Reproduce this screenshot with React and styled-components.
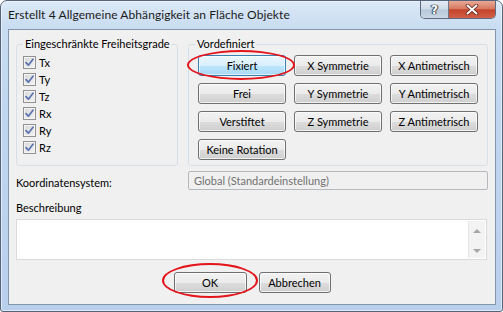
import React from "react";
import styled, { createGlobalStyle } from "styled-components";

const GlobalStyle = createGlobalStyle`
  html, body {
    margin: 0;
    padding: 0;
    background: #ffffff;
  }
  body {
    font-family: Lato, "Liberation Sans", sans-serif;
    font-size: 11px;
    color: #000;
  }
  * {
    box-sizing: border-box;
  }
`;

const dofs = ["Tx", "Ty", "Tz", "Rx", "Ry", "Rz"];

const presets = [
  { label: "Fixiert", hot: true, mark: true },
  { label: "X Symmetrie" },
  { label: "X Antimetrisch" },
  { label: "Frei" },
  { label: "Y Symmetrie" },
  { label: "Y Antimetrisch" },
  { label: "Verstiftet" },
  { label: "Z Symmetrie" },
  { label: "Z Antimetrisch" },
  { label: "Keine Rotation" },
];

function CheckMark() {
  return (
    <svg width="9" height="9" viewBox="0 0 9 9">
      <path
        d="M1 4.6 L3.4 7.2 L8 1.2"
        fill="none"
        stroke="#5a72b0"
        strokeWidth="1.7"
        strokeLinecap="round"
        strokeLinejoin="round"
      />
    </svg>
  );
}

function CloseGlyph() {
  return (
    <svg width="14" height="11" viewBox="0 0 14 11">
      <path d="M2.5 1.5 L11.5 9.5 M11.5 1.5 L2.5 9.5" stroke="#5a2318" strokeWidth="3.6" strokeLinecap="round" />
      <path d="M2.5 1.5 L11.5 9.5 M11.5 1.5 L2.5 9.5" stroke="#ffffff" strokeWidth="2" strokeLinecap="round" />
    </svg>
  );
}

function App() {
  return (
    <>
      <GlobalStyle />
      <Window>
        <TitleBar>
          <Title>Erstellt 4 Allgemeine Abhängigkeit an Fläche Objekte</Title>
          <CaptionButtons>
            <HelpButton>?</HelpButton>
            <CloseButton>
              <CloseGlyph />
            </CloseButton>
          </CaptionButtons>
        </TitleBar>
        <Client>
          <TopRow>
            <Group $width={162}>
              <Legend>Eingeschränkte Freiheitsgrade</Legend>
              <CheckList>
                {dofs.map((d) => (
                  <CheckRow key={d}>
                    <CheckBox>
                      <CheckMark />
                    </CheckBox>
                    <span>{d}</span>
                  </CheckRow>
                ))}
              </CheckList>
            </Group>
            <Group $width={300}>
              <Legend>Vordefiniert</Legend>
              <PresetGrid>
                {presets.map((p) =>
                  p.mark ? (
                    <Marked key={p.label} $inset="-5px -9px -4px -11px">
                      <Button $hot={p.hot}>{p.label}</Button>
                    </Marked>
                  ) : (
                    <Button key={p.label}>{p.label}</Button>
                  )
                )}
              </PresetGrid>
            </Group>
          </TopRow>
          <FieldRow>
            <FieldLabel>Koordinatensystem:</FieldLabel>
            <DisabledField>Global (Standardeinstellung)</DisabledField>
          </FieldRow>
          <SectionLabel>Beschreibung</SectionLabel>
          <TextArea>
            <ScrollBar>
              <Arrow $up />
              <Arrow />
            </ScrollBar>
          </TextArea>
          <Footer>
            <Marked $inset="-9px -11px -5px -12px">
              <Button $width={73}>OK</Button>
            </Marked>
            <Button $width={72}>Abbrechen</Button>
          </Footer>
        </Client>
      </Window>
    </>
  );
}

const Window = styled.div`
  width: 503px;
  height: 312px;
  display: flex;
  flex-direction: column;
  border: 1px solid #55647a;
  border-radius: 7px 7px 3px 3px;
  background: linear-gradient(180deg, #dce9f7 0%, #c8dcf1 9%, #bed6ef 40%, #b8d0ec 100%);
  box-shadow: inset 0 0 0 1px rgba(255, 255, 255, 0.55);
  overflow: hidden;
`;

const TitleBar = styled.div`
  height: 28px;
  display: flex;
  align-items: flex-start;
  flex-shrink: 0;
`;

const Title = styled.div`
  padding: 6px 0 0 7px;
  font-size: 12px;
  letter-spacing: 0.08px;
  line-height: 16px;
  color: #1a1a1a;
  white-space: nowrap;
`;

const CaptionButtons = styled.div`
  margin-left: auto;
  margin-right: 6px;
  display: flex;
  height: 18px;
  border: 1px solid #5e6b7e;
  border-top: none;
  border-radius: 0 0 5px 5px;
  overflow: hidden;
`;

const HelpButton = styled.div`
  width: 28px;
  display: flex;
  align-items: center;
  justify-content: center;
  background: linear-gradient(180deg, #e3ebf4 0%, #cfdbe8 48%, #b8c8da 52%, #c9d7e6 100%);
  border-right: 1px solid #6b7789;
  font-family: "DejaVu Sans", sans-serif;
  font-weight: bold;
  font-size: 12px;
  color: #ffffff;
  text-shadow: 0 0 1px #2f3a4a, 0 0 1px #2f3a4a, 1px 0 1px #2f3a4a, -1px 0 1px #2f3a4a;
`;

const CloseButton = styled.div`
  width: 46px;
  display: flex;
  align-items: center;
  justify-content: center;
  background: linear-gradient(180deg, #e9a996 0%, #d77a62 45%, #c4432a 52%, #d2604a 100%);
`;

const Client = styled.div`
  flex: 1;
  margin: 0 6px 6px 7px;
  border: 1px solid #8496aa;
  background: #f0f0f0;
  padding: 7px 7px;
  display: flex;
  flex-direction: column;
`;

const TopRow = styled.div`
  display: flex;
  gap: 10px;
  height: 129px;
`;

const Group = styled.fieldset`
  width: ${(p) => p.$width}px;
  margin: 0;
  padding: 0 6px;
  min-width: 0;
  border: 1px solid #d5dfe5;
  border-radius: 3px;
`;

const Legend = styled.legend`
  padding: 0 2px;
  font-size: 11px;
  line-height: 14px;
  white-space: nowrap;
`;

const CheckList = styled.div`
  display: flex;
  flex-direction: column;
  padding-top: 3px;
`;

const CheckRow = styled.div`
  height: 17px;
  display: flex;
  align-items: center;
  gap: 3px;
`;

const CheckBox = styled.span`
  width: 13px;
  height: 13px;
  border: 1px solid #929292;
  background: linear-gradient(135deg, #d9d9d9 0%, #e8e8e8 60%, #f2f2f2 100%);
  box-shadow: inset 0 0 0 1px #f4f4f4;
  display: flex;
  align-items: center;
  justify-content: center;
`;

const PresetGrid = styled.div`
  display: grid;
  grid-template-columns: repeat(3, 88px);
  grid-auto-rows: 21px;
  column-gap: 8px;
  row-gap: 7px;
  padding: 4px 0 0 3px;
`;

const Marked = styled.span`
  position: relative;
  display: inline-flex;
  &::after {
    content: "";
    position: absolute;
    inset: ${(p) => p.$inset};
    border: 2px solid #e3141a;
    border-radius: 50%;
    pointer-events: none;
  }
`;

const Button = styled.button`
  width: ${(p) => (p.$width ? `${p.$width}px` : "100%")};
  height: 21px;
  padding: 0;
  font-family: inherit;
  font-size: 11px;
  color: #000;
  border: 1px solid ${(p) => (p.$hot ? "#3c7fb1" : "#707070")};
  border-radius: 3px;
  background: ${(p) =>
    p.$hot
      ? "linear-gradient(180deg, #eaf6fd 0%, #d9f0fc 50%, #bee6fd 51%, #a7d9f5 100%)"
      : "linear-gradient(180deg, #f2f2f2 0%, #ebebeb 50%, #dddddd 51%, #cfcfcf 100%)"};
  box-shadow: inset 0 0 0 1px ${(p) => (p.$hot ? "rgba(255,255,255,0.6)" : "rgba(255,255,255,0.7)")};
`;

const FieldRow = styled.div`
  display: grid;
  grid-template-columns: 172px 1fr;
  align-items: center;
  margin-top: 5px;
`;

const FieldLabel = styled.span`
  padding-top: 4px;
`;

const DisabledField = styled.div`
  height: 19px;
  border: 1px solid #b5b9bd;
  border-radius: 2px;
  padding: 0 5px;
  display: flex;
  align-items: center;
  color: #707070;
`;

const SectionLabel = styled.div`
  margin-top: 11px;
  line-height: 14px;
`;

const TextArea = styled.div`
  margin-top: 4px;
  height: 41px;
  width: 471px;
  border: 1px solid #dadada;
  background: #ffffff;
  display: flex;
  justify-content: flex-end;
`;

const ScrollBar = styled.div`
  width: 17px;
  margin: 1px;
  background: #f3f3f3;
  border-left: 1px solid #e6e6e6;
  display: flex;
  flex-direction: column;
  justify-content: space-between;
  align-items: center;
  padding: 8px 0 5px;
`;

const Arrow = styled.span`
  width: 0;
  height: 0;
  border-left: 4px solid transparent;
  border-right: 4px solid transparent;
  ${(p) => (p.$up ? "border-bottom: 4px solid #a6a6a6;" : "border-top: 4px solid #a6a6a6;")}
`;

const Footer = styled.div`
  margin-top: 12px;
  display: flex;
  justify-content: center;
  gap: 12px;
`;

export default App;
